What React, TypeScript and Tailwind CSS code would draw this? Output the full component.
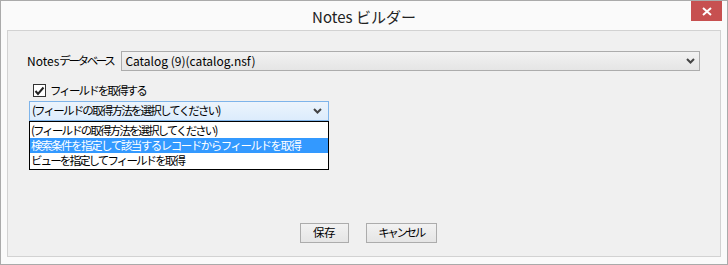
import React from 'react';

const jp = { fontFamily: '"Noto Sans CJK JP", "Noto Sans", sans-serif' };

const Chevron: React.FC = () => (
  <svg width="9" height="6" viewBox="0 0 9 6" className="text-[#444]">
    <path d="M1 1 L4.5 4.5 L8 1" fill="none" stroke="currentColor" strokeWidth="2" />
  </svg>
);

export default function App() {
  return (
    <div className="w-[728px] h-[265px] bg-[#fafafa] border border-[#aaaaaa] flex flex-col text-[12px] text-black" style={jp}>
      <div className="relative h-[29px] flex items-center justify-center">
        <span className="text-[15px] text-[#222] leading-none mt-[2px]">Notes ビルダー</span>
        <div className="absolute right-[5px] top-0 w-[31px] h-[20px] bg-[#c75050] flex items-center justify-center">
          <svg width="10" height="9" viewBox="0 0 10 9">
            <path d="M1 1 L9 8 M9 1 L1 8" stroke="white" strokeWidth="2" />
          </svg>
        </div>
      </div>
      <div className="mx-[6px] h-[227px] bg-[#f0f0f0] border border-[#d2d2d2] flex flex-col">
        <div className="flex items-center mt-[20px] ml-[19px]">
          <span className="leading-none">Notes</span>
          <span className="leading-none text-[11.5px] tracking-[-2.4px]">データベース</span>
          <div className="ml-[8px] w-[579px] h-[20px] border border-[#acacac] bg-gradient-to-b from-[#f2f2f2] to-[#e5e5e5] flex items-center justify-between pl-[3px] pr-[4px]">
            <span className="leading-none">Catalog (9)(catalog.nsf)</span>
            <Chevron />
          </div>
        </div>
        <div className="flex items-center mt-[13px] ml-[25px]">
          <div className="w-[13px] h-[13px] border border-[#333] bg-white flex items-center justify-center">
            <svg width="11" height="10" viewBox="0 0 11 10">
              <path d="M1.5 5 L4 8 L9.5 1.5" fill="none" stroke="#222" strokeWidth="2" />
            </svg>
          </div>
          <span className="ml-[4px] leading-none text-[11.5px] tracking-[-1.9px]">フィールドを取得する</span>
        </div>
        <div className="ml-[21px] mt-[4px] w-[300px] flex flex-col text-[11.5px]">
          <div className="h-[20px] border border-[#7eb4ea] bg-gradient-to-b from-[#ecf4fc] to-[#dcecfc] flex items-center justify-between pl-[2px] pr-[6px]">
            <span className="leading-none tracking-[-1.8px]">(フィールドの取得方法を選択してください)</span>
            <Chevron />
          </div>
          <div className="border border-black bg-white flex flex-col py-[1px]">
            <div className="h-[15px] flex items-center pl-[1px] leading-none tracking-[-1.9px] whitespace-nowrap">(フィールドの取得方法を選択してください)</div>
            <div className="h-[15px] flex items-center pl-[1px] leading-none tracking-[-1.5px] whitespace-nowrap bg-[#3399ff] text-white">検索条件を指定して該当するレコードからフィールドを取得</div>
            <div className="h-[15px] flex items-center pl-[1px] leading-none tracking-[-1.9px] whitespace-nowrap">ビューを指定してフィールドを取得</div>
          </div>
        </div>
        <div className="flex-1" />
        <div className="flex justify-center gap-[17px] mb-[13px] ml-[8px] text-[11.5px]">
          <button className="w-[49px] h-[20px] border border-[#acacac] bg-gradient-to-b from-[#f2f2f2] to-[#e5e5e5] leading-none tracking-[-0.5px]">保存</button>
          <button className="w-[71px] h-[20px] border border-[#acacac] bg-gradient-to-b from-[#f2f2f2] to-[#e5e5e5] leading-none tracking-[-2.4px]">キャンセル</button>
        </div>
      </div>
    </div>
  );
}
